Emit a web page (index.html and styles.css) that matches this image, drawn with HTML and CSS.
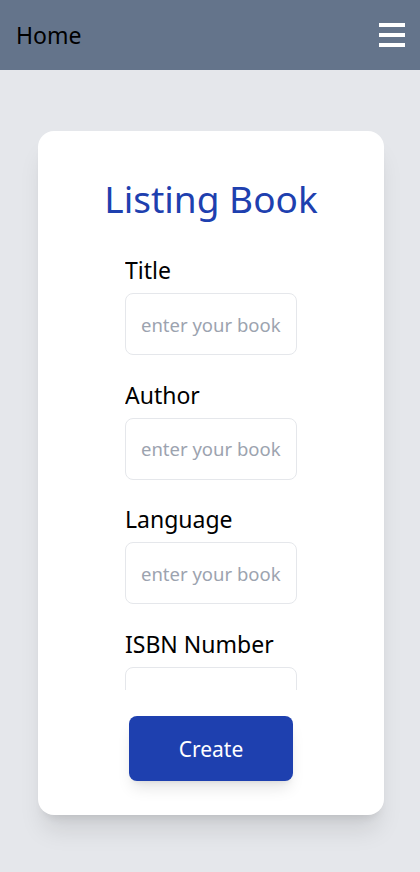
FILE: index.html
```html
<!DOCTYPE html>
<html>
<head>
<meta charset="utf-8">
<link rel="stylesheet" href="styles.css">
</head>
<body>
<header class="topbar">
  <span class="brand">Home</span>
  <button class="menu" aria-label="menu"><span></span><span></span><span></span></button>
</header>
<main class="page">
  <section class="card">
    <h1 class="card-title">Listing Book</h1>
    <div class="fields">
      <label class="field"><span class="field-label">Title</span><input class="field-input" placeholder="enter your book title"></label>
      <label class="field"><span class="field-label">Author</span><input class="field-input" placeholder="enter your book author"></label>
      <label class="field"><span class="field-label">Language</span><input class="field-input" placeholder="enter your book language"></label>
      <label class="field"><span class="field-label">ISBN Number</span><input class="field-input" placeholder="enter your book isbn"></label>
    </div>
    <button class="create">Create</button>
  </section>
</main>
</body>
</html>
```
FILE: styles.css
```css
* { box-sizing: border-box; }
html, body { margin: 0; padding: 0; }
body {
  background: #e5e7eb;
  font-family: "Noto Sans", "Open Sans", sans-serif;
  color: #000;
  height: 872px;
  overflow: hidden;
}
.topbar {
  height: 70px;
  background: #64748b;
  display: flex;
  align-items: center;
  justify-content: space-between;
  padding: 0 15px 0 16px;
}
.brand { font-size: 23px; line-height: 32px; }
.menu {
  border: 0; background: none; padding: 0;
  display: flex; flex-direction: column; gap: 6px;
  width: 26px;
}
.menu span { display: block; height: 4px; background: #fff; }
.page { padding-top: 61px; }
.card {
  margin-left: 38px;
  width: 346px;
  height: 684px;
  background: #fff;
  border-radius: 16px;
  box-shadow: 0 20px 25px -5px rgba(0,0,0,.1), 0 8px 10px -6px rgba(0,0,0,.1);
  display: flex;
  flex-direction: column;
  align-items: center;
  padding-top: 40px;
}
.card-title {
  margin: 0;
  font-weight: 400;
  font-size: 37px;
  line-height: 56px;
  color: #1e40af;
}
.fields {
  margin-top: 30px;
  width: 172px;
  height: 433px;
  overflow: hidden;
  display: flex;
  flex-direction: column;
  gap: 26.5px;
  flex-shrink: 0;
}
.field { display: flex; flex-direction: column; gap: 10px; }
.field-label { font-size: 23px; line-height: 26px; white-space: nowrap; }
.field-input {
  height: 62px;
  width: 172px;
  border: 1px solid #e5e7eb;
  border-radius: 8px;
  padding: 0 15px;
  font-family: inherit;
  font-size: 18.5px;
  outline: none;
  flex-shrink: 0;
}
.field-input::placeholder { color: #9ca3af; }
.create {
  margin-top: 26px;
  width: 164px;
  height: 65px;
  border: 0;
  border-radius: 8px;
  background: #1e40af;
  color: #fff;
  font-family: inherit;
  font-size: 21px;
  box-shadow: 0 10px 15px -3px rgba(0,0,0,.1), 0 4px 6px -4px rgba(0,0,0,.1);
}
```
